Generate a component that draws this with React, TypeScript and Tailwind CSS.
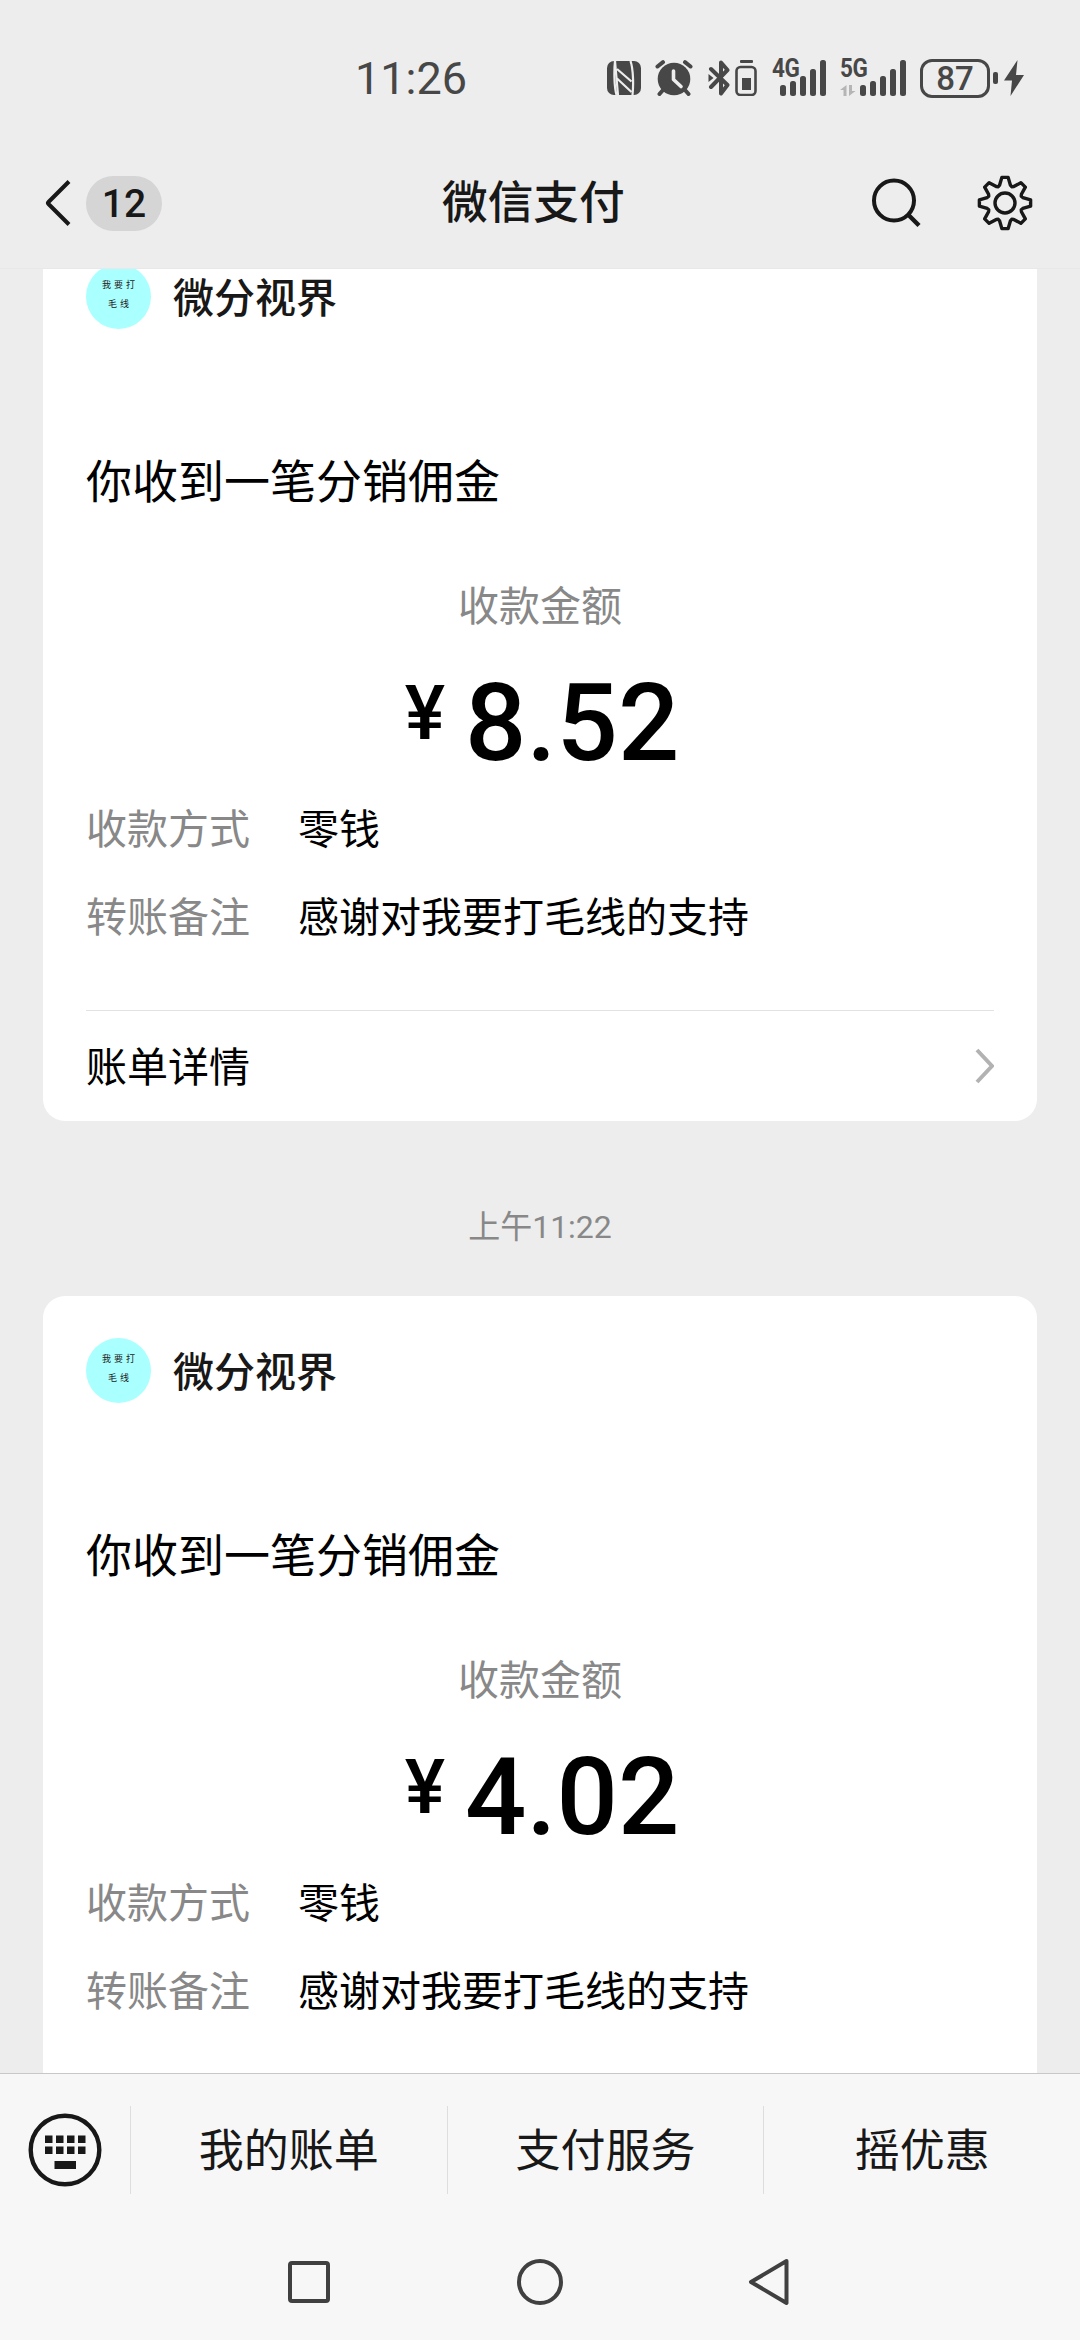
interface Payment {
  id: number;
  amount: string;
  rows: { label: string; value: string }[];
  detail?: boolean;
}

const rows = [
  { label: '收款方式', value: '零钱' },
  { label: '转账备注', value: '感谢对我要打毛线的支持' },
];

const payments: Payment[] = [
  { id: 1, amount: '8.52', rows, detail: true },
  { id: 2, amount: '4.02', rows },
];

const menuItems = ['我的账单', '支付服务', '摇优惠'];

// Outline of an eight-toothed gear centred on 0,0
const gearPath =
  Array.from({ length: 8 }, (_, i) =>
    [
      [-17, 18.6],
      [-7, 25.8],
      [7, 25.8],
      [17, 18.6],
      [22.5, 17.6],
    ].map(([deg, r]) => {
      const a = ((deg + i * 45) * Math.PI) / 180;
      return `${(Math.sin(a) * r).toFixed(2)} ${(-Math.cos(a) * r).toFixed(2)}`;
    })
  )
    .flat()
    .map((p, i) => (i === 0 ? `M${p}` : `L${p}`))
    .join('') + 'Z';

function Signal({ label, muted }: { label: string; muted?: boolean }) {
  return (
    <div className="relative h-9 w-[54px]">
      <svg className="block" width="54" height="36" viewBox="0 0 54 36" fill="#474747">
        <rect x="8" y="25" width="6" height="11" rx="2.5" />
        <rect x="18" y="21" width="6" height="15" rx="2.5" />
        <rect x="28" y="16" width="6" height="20" rx="2.5" />
        <rect x="38" y="9" width="6" height="27" rx="2.5" />
        <rect x="48" y="0" width="6" height="36" rx="2.5" />
      </svg>
      {muted && (
        <svg className="absolute -left-3 bottom-0" width="16" height="11" viewBox="0 0 16 11" fill="#b5b5b5">
          <path d="M6.500 0V11H3.500V5H0ZM9 0V11L15.500 6H12V0Z" />
        </svg>
      )}
      <span
        className={`absolute -top-[5px] origin-left scale-x-90 font-['Roboto'] text-[25px] leading-[28px] font-bold tracking-[-0.5px] ${
          muted ? '-left-3' : 'left-0'
        }`}
      >
        {label}
      </span>
    </div>
  );
}

function StatusBar() {
  return (
    <div className="flex h-[136px] shrink-0 items-center pt-5 text-[#474747]">
      <span className="ml-[355px] w-[252px] font-['Roboto'] text-[45px] leading-none">11:26</span>

      {/* NFC */}
      <svg width="34" height="34" viewBox="0 0 34 34">
        <rect width="34" height="34" rx="7" fill="#474747" />
        <path d="M8 0C7 9 7 25 9.500 34M23.500 0C26.500 9 26.500 25 25.500 34" fill="none" stroke="#ededed" strokeWidth="2.200" />
        <path d="M8 0L11 34M10 8L24.500 20.500M10 17.500L24.500 31" fill="none" stroke="#ededed" strokeWidth="2.200" />
      </svg>

      {/* Alarm */}
      <svg className="ml-[14px]" width="38" height="36" viewBox="0 0 38 36">
        <circle cx="19" cy="19" r="16.300" fill="#474747" />
        <path d="M2.500 6.500L8 2.200M35.500 6.500L30 2.200M8 30L4.500 34M30 30L33.500 34" stroke="#474747" strokeWidth="4" strokeLinecap="round" />
        <path d="M18.500 11V19.500L26 26.500" fill="none" stroke="#ededed" strokeWidth="3.600" strokeLinecap="round" strokeLinejoin="round" />
      </svg>

      {/* Bluetooth with device battery */}
      <svg className="ml-[15px]" width="50" height="36" viewBox="0 0 50 36">
        <path d="M3 9L19.500 25L13 33.500V2.500L19.500 10L3 27" fill="none" stroke="#474747" strokeWidth="4" strokeLinecap="round" strokeLinejoin="round" />
        <path d="M.5 14L5.500 18L.5 22Z" fill="#474747" />
        <rect x="32" y="0" width="13" height="3" rx="1" fill="#474747" />
        <rect x="28.500" y="7" width="19" height="28" rx="4" fill="none" stroke="#474747" strokeWidth="2.600" />
        <rect x="34" y="18" width="9" height="12" fill="#474747" />
      </svg>

      <div className="ml-[14px]">
        <Signal label="4G" />
      </div>
      <div className="ml-[26px]">
        <Signal label="5G" muted />
      </div>

      <div className="ml-[14px] flex items-center">
        <span className="flex h-[39px] w-[70px] items-center justify-center rounded-[12px] border-[3px] border-[#474747] font-['Roboto'] text-[33px] leading-none font-medium">
          87
        </span>
        <span className="ml-[3px] h-3 w-[5px] rounded-[2px] bg-[#474747]" />
        <svg className="ml-[6px]" width="20" height="36" viewBox="0 0 20 36" fill="#474747">
          <path d="M13.500 0L0 20.500H8L6.500 36L20 15H12Z" />
        </svg>
      </div>
    </div>
  );
}

function Header() {
  return (
    <header className="flex h-[133px] shrink-0 items-center border-b border-[#e8e8e8] pt-0.5 text-[#181818]">
      <div className="flex w-[442px] items-center pl-[45px]">
        <svg width="26" height="46" viewBox="0 0 26 46" fill="none" stroke="#181818" strokeWidth="4">
          <path d="M24 1.500L3.500 22Q2.500 23 3.500 24L24 44.500" />
        </svg>
        <span className="ml-[15px] flex h-[55px] w-[76px] items-center justify-center rounded-full bg-[#d5d5d5] pt-0.5 font-['Roboto'] text-[39px] leading-none font-medium">
          12
        </span>
      </div>
      <h1 className="-mt-[9px] text-[45.700px] leading-[60px] font-medium">微信支付</h1>
      <svg className="ml-auto" width="50" height="50" viewBox="0 0 50 50" fill="none" stroke="#181818" strokeWidth="4">
        <circle cx="23" cy="22.500" r="20" />
        <path d="M37 36.500L48 47.500" strokeWidth="4.400" />
      </svg>
      <svg className="mr-[47px] ml-[56px]" width="56" height="56" viewBox="-28 -28 56 56" fill="none" stroke="#181818" strokeWidth="3.400" strokeLinejoin="round">
        <path d={gearPath} />
        <circle r="10" />
      </svg>
    </header>
  );
}

function PaymentCard({ payment }: { payment: Payment }) {
  return (
    <section className="mx-[43px] h-[899px] shrink-0 rounded-[22px] bg-white px-[43px] pt-[42px] text-black">
      <div className="flex h-[65px] items-center">
        <div className="flex size-[65px] flex-col items-center rounded-full bg-[#aaffff] pt-[11px] text-[9px] leading-[19px] tracking-[3px] text-[#222]">
          <span className="-mr-[3px]">我要打</span>
          <span className="-mr-[3px]">毛线</span>
        </div>
        <span className="-mt-[3px] ml-[22px] text-[41px] leading-[60px] font-medium text-[#181818]">微分视界</span>
      </div>

      <p className="mt-[119px] text-[46px] leading-[60px]">你收到一笔分销佣金</p>

      <p className="mt-[65px] text-center text-[41px] leading-[60px] text-[#888]">收款金额</p>

      {/* Amount */}
      <div className="mt-[34px] flex h-[112px] items-start justify-center pl-1 font-['Roboto'] font-medium">
        <span className="mt-[8px] text-[76px] leading-[76px]">¥</span>
        <span className="ml-[20px] text-[108px] leading-[112px]">{payment.amount}</span>
      </div>

      <dl className="mt-[17px] text-[41px] leading-[60px]">
        {payment.rows.map((row) => (
          <div key={row.label} className="mb-7 flex">
            <dt className="w-[212px] text-[#888]">{row.label}</dt>
            <dd>{row.value}</dd>
          </div>
        ))}
      </dl>

      {payment.detail && (
        <div className="mt-[66px] flex h-[110px] items-center justify-between border-t border-[#e2e2e2]">
          <span className="-mt-[3px] text-[41px] leading-[60px]">账单详情</span>
          <svg width="19" height="36" viewBox="0 0 19 36" fill="none" stroke="#b2b2b2" strokeWidth="4">
            <path d="M2 2L17 18L2 34" />
          </svg>
        </div>
      )}
    </section>
  );
}

function MenuBar() {
  return (
    <nav className="flex h-[154px] shrink-0 items-center border-t border-[#c8c8c8] pb-0.5 text-[#181818]">
      <div className="flex w-[130px] justify-center">
        <svg width="74" height="74" viewBox="0 0 74 74" fill="#181818">
          <circle cx="37" cy="37" r="34.300" fill="none" stroke="#181818" strokeWidth="4.400" />
          {[17, 28, 39, 50].map((x) => (
            <g key={x}>
              <rect x={x} y="22.500" width="7.500" height="7.500" />
              <rect x={x} y="33.500" width="7.500" height="7.500" />
            </g>
          ))}
          <rect x="26.500" y="48" width="21.500" height="8" />
        </svg>
      </div>
      {menuItems.map((item) => (
        <div key={item} className="flex h-[88px] flex-1 items-center justify-center border-l border-[#dedede]">
          <span className="-mt-[3px] text-[45px] leading-[60px]">{item}</span>
        </div>
      ))}
    </nav>
  );
}

function SystemNav() {
  return (
    <div className="flex flex-1 items-start justify-center gap-[185px] pt-[31px]">
      <svg width="46" height="48" viewBox="0 0 46 48" fill="none" stroke="#404040" strokeWidth="4">
        <rect x="4" y="5" width="38" height="38" rx="2" />
      </svg>
      <svg width="46" height="48" viewBox="0 0 46 48" fill="none" stroke="#404040" strokeWidth="4">
        <circle cx="23" cy="24" r="21" />
      </svg>
      <svg width="46" height="48" viewBox="0 0 46 48" fill="none" stroke="#404040" strokeWidth="4" strokeLinejoin="round">
        <path d="M38.500 3L3 24L38.500 45Z" />
      </svg>
    </div>
  );
}

export default function App() {
  return (
    <div className="flex h-[2340px] w-[1080px] flex-col overflow-hidden bg-[#ededed] font-['Noto_Sans_CJK_SC',sans-serif]">
      <StatusBar />
      <Header />
      <main className="flex min-h-0 flex-1 flex-col overflow-hidden">
        {/* Scrolled so that the first card runs under the header */}
        <div className="-mt-[47px] flex flex-col">
          <PaymentCard payment={payments[0]} />
          <time className="my-[57px] h-[61px] shrink-0 pt-[17px] text-center font-['Roboto','Noto_Sans_CJK_SC',sans-serif] text-[32px] leading-[64px] text-[#888]">
            上午11:22
          </time>
          <PaymentCard payment={payments[1]} />
        </div>
      </main>
      <footer className="flex h-[267px] shrink-0 flex-col bg-[#f7f7f7]">
        <MenuBar />
        <SystemNav />
      </footer>
    </div>
  );
}
